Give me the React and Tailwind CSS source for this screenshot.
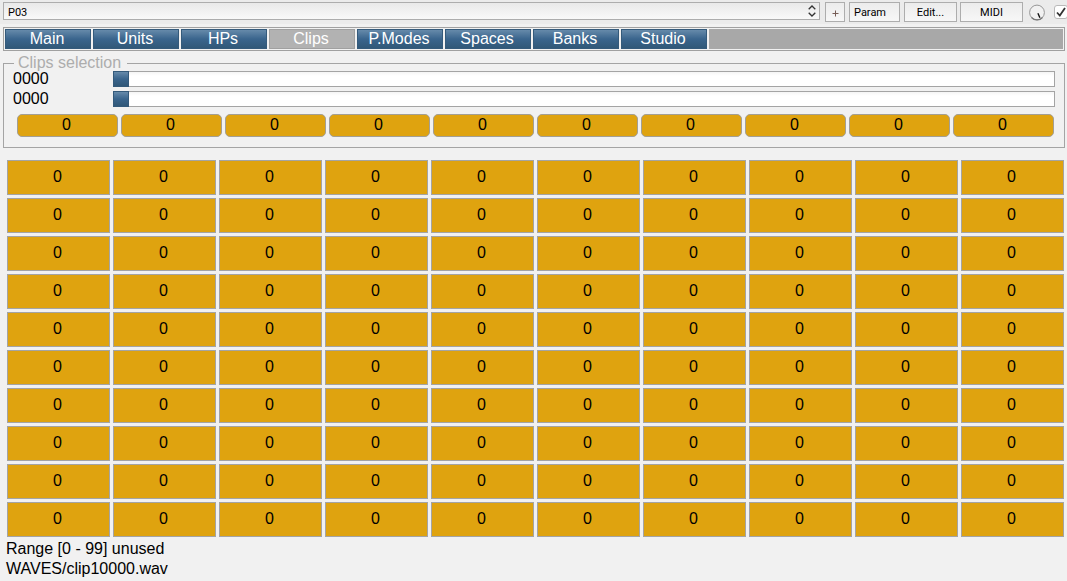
import { useState } from 'react';

const TABS = ['Main', 'Units', 'HPs', 'Clips', 'P.Modes', 'Spaces', 'Banks', 'Studio'];
const toolButton =
  'h-5 shrink-0 border border-[#adadad] bg-linear-to-b from-[#ececec] to-[#f7f7f7] pt-0.5 text-[11px] leading-4 text-black';

function Toolbar() {
  return (
    <header className="flex h-6 items-start overflow-hidden bg-[#ebebeb] pt-0.5 pl-[3px] font-[Roboto,sans-serif]">
      <div className="relative min-w-0 flex-1">
        <select
          aria-label="Preset"
          className="block h-[18px] w-full appearance-none border border-[#adadad] bg-linear-to-b from-[#e9e9e9] to-[#f9f9f9] pt-0.5 pl-1 text-[11px] leading-4 text-black"
        >
          <option>P03</option>
        </select>
        <svg className="pointer-events-none absolute top-[3px] right-1 h-3 w-2" viewBox="0 0 8 12" fill="none" stroke="#333" strokeWidth="1.3">
          <path d="M.7 4.3 4 1 7.3 4.3M.7 7.7 4 11 7.3 7.7" />
        </svg>
      </div>
      <button aria-label="Add" className={`${toolButton} ml-[5px] w-5`}>
        <svg className="mx-auto h-[7px] w-[7px]" viewBox="0 0 7 7" stroke="#765c55">
          <path d="M3.5 .5v6M.5 3.5h6" />
        </svg>
      </button>
      <button className={`${toolButton} ml-1 w-[51px] pl-1 text-left`}>Param</button>
      <button className={`${toolButton} ml-1 w-[53px]`}>Edit...</button>
      <button className={`${toolButton} ml-[3px] w-[63px]`}>MIDI</button>
      <svg className="mt-0.5 ml-1.5 h-[17px] w-4 shrink-0" viewBox="0 0 16 17" fill="none" role="img" aria-label="Level">
        <circle cx="8" cy="8.5" r="7.4" fill="#f1f1f1" stroke="#969696" />
        <path d="M2.5 13.5a7.4 7.4 0 0 0 11 0" stroke="#777" strokeWidth="1.2" />
        <path d="M8.9 9.3 10.9 13.8" stroke="#111" strokeWidth="1.4" />
      </svg>
      <label className="relative mt-[3px] ml-[9px] h-3.5 w-[13px] shrink-0">
        <input
          type="checkbox"
          defaultChecked
          aria-label="Enabled"
          className="peer block h-3.5 w-3.5 appearance-none rounded-[3px] border border-[#b9b9b9] bg-white"
        />
        <svg className="pointer-events-none absolute top-0 left-0 hidden h-3.5 w-3.5 peer-checked:block" viewBox="0 0 14 14" fill="none" stroke="#333" strokeWidth="1.8">
          <path d="m3 7.5 2.8 3L11 3" />
        </svg>
      </label>
    </header>
  );
}

function Tabs() {
  const [active, setActive] = useState('Clips');
  return (
    <nav className="mt-[3px] mr-0.5 ml-[3px] flex h-6 border border-[#a0a0a0] bg-[#f1f1f1] p-px" role="tablist">
      <div className="flex gap-0.5 pr-0.5">
        {TABS.map((tab) => (
          <button
            key={tab}
            role="tab"
            aria-selected={tab === active}
            onClick={() => setActive(tab)}
            className={`h-5 w-[86px] border pr-0.5 text-base leading-4 text-white ${
              tab === active
                ? 'border-[#a0a0a0] bg-[#b2b2b2]'
                : 'border-[#345a7b] bg-linear-to-b from-[#668aaa] via-[#3a658d] to-[#315878]'
            }`}
          >
            {tab}
          </button>
        ))}
      </div>
      <div className="flex-1 bg-[#a8a8a8]" />
    </nav>
  );
}

function ClipSlider({ label }) {
  const [value, setValue] = useState(0);
  return (
    <label className="flex h-5 items-center">
      <span className="w-[100px] shrink-0 text-base leading-5">{String(value).padStart(4, '0')}</span>
      <input
        type="range"
        min="0"
        max="9999"
        value={value}
        aria-label={label}
        onChange={(e) => setValue(Number(e.target.value))}
        className="block h-4 min-w-0 flex-1 appearance-none bg-linear-to-b from-[#f2f2f2] to-white to-30% shadow-[inset_0_0_0_1px_#a4a4a4] [&::-webkit-slider-thumb]:h-4 [&::-webkit-slider-thumb]:w-4 [&::-webkit-slider-thumb]:appearance-none [&::-webkit-slider-thumb]:border [&::-webkit-slider-thumb]:border-[#345a7b] [&::-webkit-slider-thumb]:bg-linear-to-b [&::-webkit-slider-thumb]:from-[#668aaa] [&::-webkit-slider-thumb]:via-[#3a658d] [&::-webkit-slider-thumb]:to-[#315878]"
      />
    </label>
  );
}

export default function App() {
  return (
    <div className="min-h-screen bg-[#f1f1f1] font-['Liberation_Sans',Arial,sans-serif] text-black">
      <Toolbar />
      <Tabs />
      <main>
        <fieldset className="mt-0.5 mr-0.5 ml-[3px] min-w-0 border border-[#a4a4a4] pr-[9px] pb-2.5 pl-[9px]">
          <legend className="ml-px h-5 pr-1.5 pl-1 text-base leading-5 text-[#adadad]">Clips selection</legend>
          <div className="-mt-1">
            <ClipSlider label="Clip bank" />
            <ClipSlider label="Clip offset" />
          </div>
          <div className="mt-[5px] ml-1 grid grid-cols-10 gap-[3px] pr-px">
            {Array.from({ length: 10 }, (_, i) => (
              <button key={i} className="h-[23px] rounded-[5px] border border-[#a39f94] bg-[#dfa30f] pr-0.5 pb-0.5 text-base leading-5">
                0
              </button>
            ))}
          </div>
        </fieldset>
        <div className="mt-3 mr-[3px] ml-[7px] grid grid-cols-10 gap-[3px]">
          {Array.from({ length: 100 }, (_, i) => (
            <button key={i} className="h-[35px] border border-[#a4a4a4] bg-[#dfa30f] pr-0.5 pb-px text-base leading-5">
              0
            </button>
          ))}
        </div>
        <div className="mt-0.5 pl-1.5 text-base leading-5">
          <p>Range [0 - 99] unused</p>
          <p>WAVES/clip10000.wav</p>
        </div>
      </main>
    </div>
  );
}
